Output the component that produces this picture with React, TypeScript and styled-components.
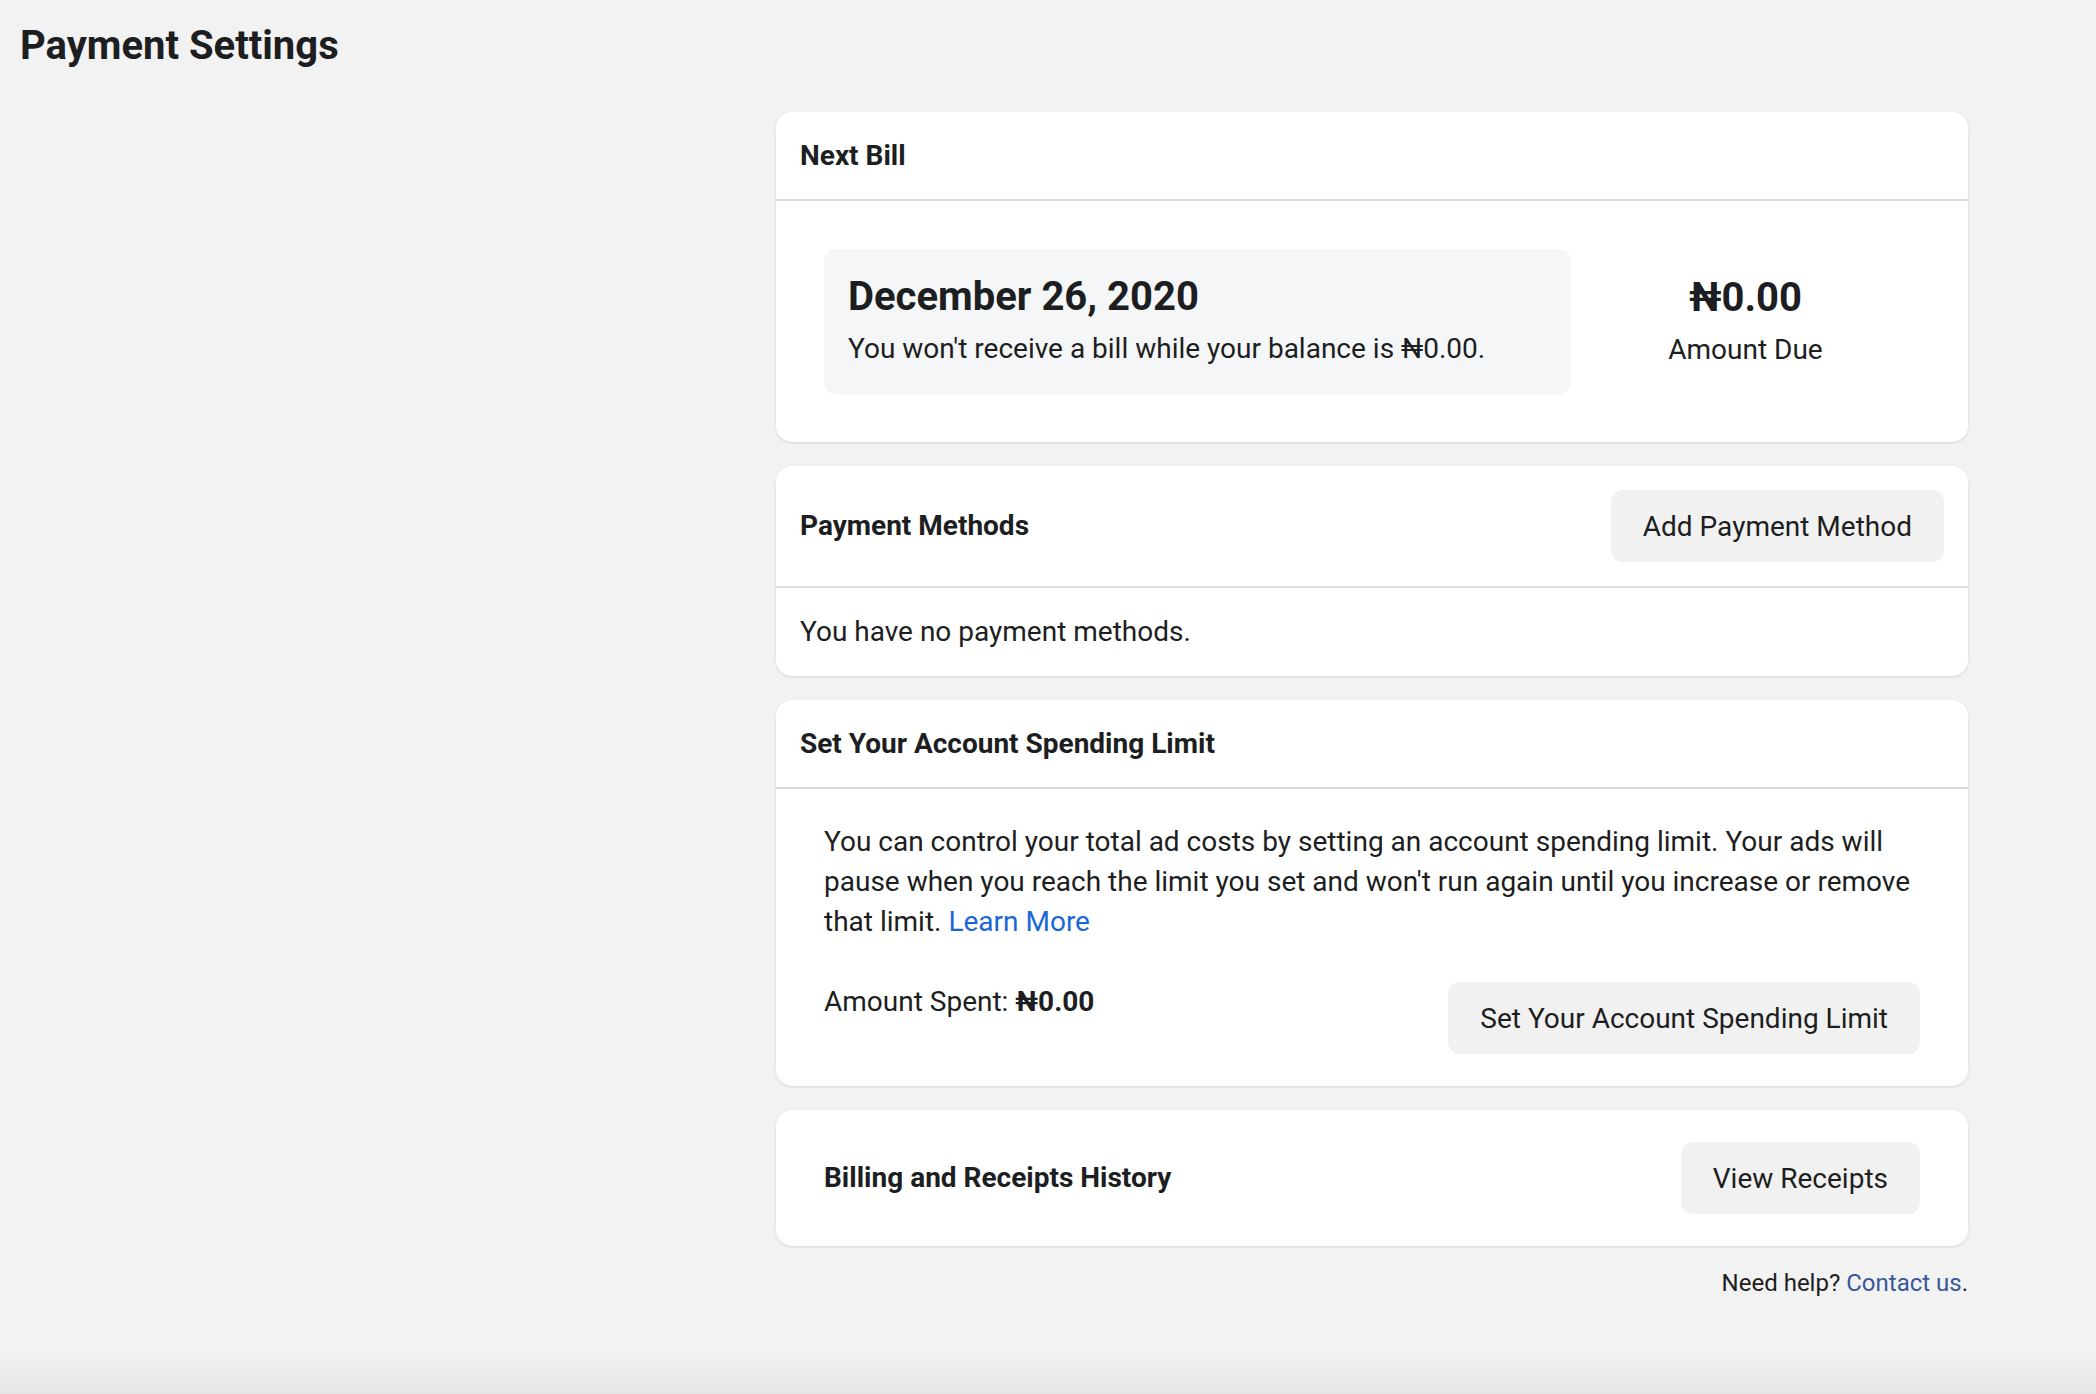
import styled, { createGlobalStyle } from "styled-components";

const GlobalStyle = createGlobalStyle`
    html, body {
        margin: 0;
        padding: 0;
    }
    body {
        font-family: Roboto, "Liberation Sans", Arial, sans-serif;
        color: #1c1e21;
        background: #f2f2f2;
    }
    * {
        box-sizing: border-box;
    }
`;

const StyledPage = styled.div`
    min-height: 100vh;
    padding: 21px 20px 60px;
    background: linear-gradient(to bottom, #f2f2f2 calc(100% - 40px), #e5e5e5 100%);
`;

const StyledTitle = styled.h1`
    margin: 0 0 42px;
    font-size: 40px;
    line-height: 49px;
    font-weight: 700;
`;

const StyledLayout = styled.div`
    display: grid;
    grid-template-columns: 756px 1192px;
`;

const StyledColumn = styled.main`
    grid-column: 2;
    display: flex;
    flex-direction: column;
    gap: 24px;
`;

const StyledCard = styled.section`
    background: #fff;
    border-radius: 16px;
    box-shadow: 0 1px 3px rgba(0, 0, 0, 0.12);
    overflow: hidden;
`;

const StyledCardHeader = styled.header<{ $tall?: boolean }>`
    display: flex;
    align-items: center;
    justify-content: space-between;
    min-height: 89px;
    padding: ${(p) => (p.$tall ? "24px 24px 24px 24px" : "0 24px")};
    border-bottom: 2px solid #dadde1;
`;

const StyledCardTitle = styled.h2`
    margin: 0;
    font-size: 28px;
    line-height: 36px;
    font-weight: 700;
`;

const StyledCardBody = styled.div<{ $pad: string }>`
    padding: ${(p) => p.$pad};
    font-size: 28px;
    line-height: 40px;
`;

const StyledButton = styled.button`
    height: 72px;
    padding: 0 32px;
    border: none;
    border-radius: 12px;
    background: #f1f1f1;
    color: #1c1e21;
    font-family: inherit;
    font-size: 28px;
    font-weight: 400;
    cursor: pointer;
    white-space: nowrap;
`;

const StyledBillRow = styled.div`
    display: flex;
    align-items: center;
`;

const StyledBillBox = styled.div`
    width: 747px;
    padding: 24px 24px 25px;
    border-radius: 12px;
    background: #f5f6f7;
`;

const StyledBigValue = styled.div`
    margin-bottom: 8px;
    font-size: 40px;
    line-height: 48px;
    font-weight: 700;
`;

const StyledDueBox = styled.div`
    flex: 1;
    text-align: center;
`;

const StyledParagraph = styled.p`
    margin: 0 0 40px;
`;

const StyledLink = styled.a<{ $dark?: boolean }>`
    color: ${(p) => (p.$dark ? "#385898" : "#1b66d6")};
    text-decoration: none;
    cursor: pointer;
`;

const StyledSpendRow = styled.div`
    display: flex;
    align-items: flex-start;
    justify-content: space-between;
`;

const StyledHistoryRow = styled.div`
    display: flex;
    align-items: center;
    justify-content: space-between;
    padding: 32px 48px;
`;

const StyledFooter = styled.div`
    margin-top: -3px;
    text-align: right;
    font-size: 24px;
    line-height: 32px;
`;

function App() {
    return (
        <StyledPage>
            <GlobalStyle />
            <StyledTitle>Payment Settings</StyledTitle>
            <StyledLayout>
                <StyledColumn>
                    <StyledCard>
                        <StyledCardHeader>
                            <StyledCardTitle>Next Bill</StyledCardTitle>
                        </StyledCardHeader>
                        <StyledCardBody $pad="48px">
                            <StyledBillRow>
                                <StyledBillBox>
                                    <StyledBigValue>December 26, 2020</StyledBigValue>
                                    <div>You won't receive a bill while your balance is ₦0.00.</div>
                                </StyledBillBox>
                                <StyledDueBox>
                                    <StyledBigValue>₦0.00</StyledBigValue>
                                    <div>Amount Due</div>
                                </StyledDueBox>
                            </StyledBillRow>
                        </StyledCardBody>
                    </StyledCard>

                    <StyledCard>
                        <StyledCardHeader $tall>
                            <StyledCardTitle>Payment Methods</StyledCardTitle>
                            <StyledButton>Add Payment Method</StyledButton>
                        </StyledCardHeader>
                        <StyledCardBody $pad="24px">You have no payment methods.</StyledCardBody>
                    </StyledCard>

                    <StyledCard>
                        <StyledCardHeader>
                            <StyledCardTitle>Set Your Account Spending Limit</StyledCardTitle>
                        </StyledCardHeader>
                        <StyledCardBody $pad="33px 48px 32px">
                            <StyledParagraph>
                                You can control your total ad costs by setting an account spending limit. Your ads will pause when you reach the limit you set and won't run again until you increase or remove that limit.{" "}
                                <StyledLink>Learn More</StyledLink>
                            </StyledParagraph>
                            <StyledSpendRow>
                                <div>
                                    Amount Spent: <b>₦0.00</b>
                                </div>
                                <StyledButton>Set Your Account Spending Limit</StyledButton>
                            </StyledSpendRow>
                        </StyledCardBody>
                    </StyledCard>

                    <StyledCard>
                        <StyledHistoryRow>
                            <StyledCardTitle>Billing and Receipts History</StyledCardTitle>
                            <StyledButton>View Receipts</StyledButton>
                        </StyledHistoryRow>
                    </StyledCard>

                    <StyledFooter>
                        Need help? <StyledLink $dark>Contact us</StyledLink>.
                    </StyledFooter>
                </StyledColumn>
            </StyledLayout>
        </StyledPage>
    );
}

export default App;
